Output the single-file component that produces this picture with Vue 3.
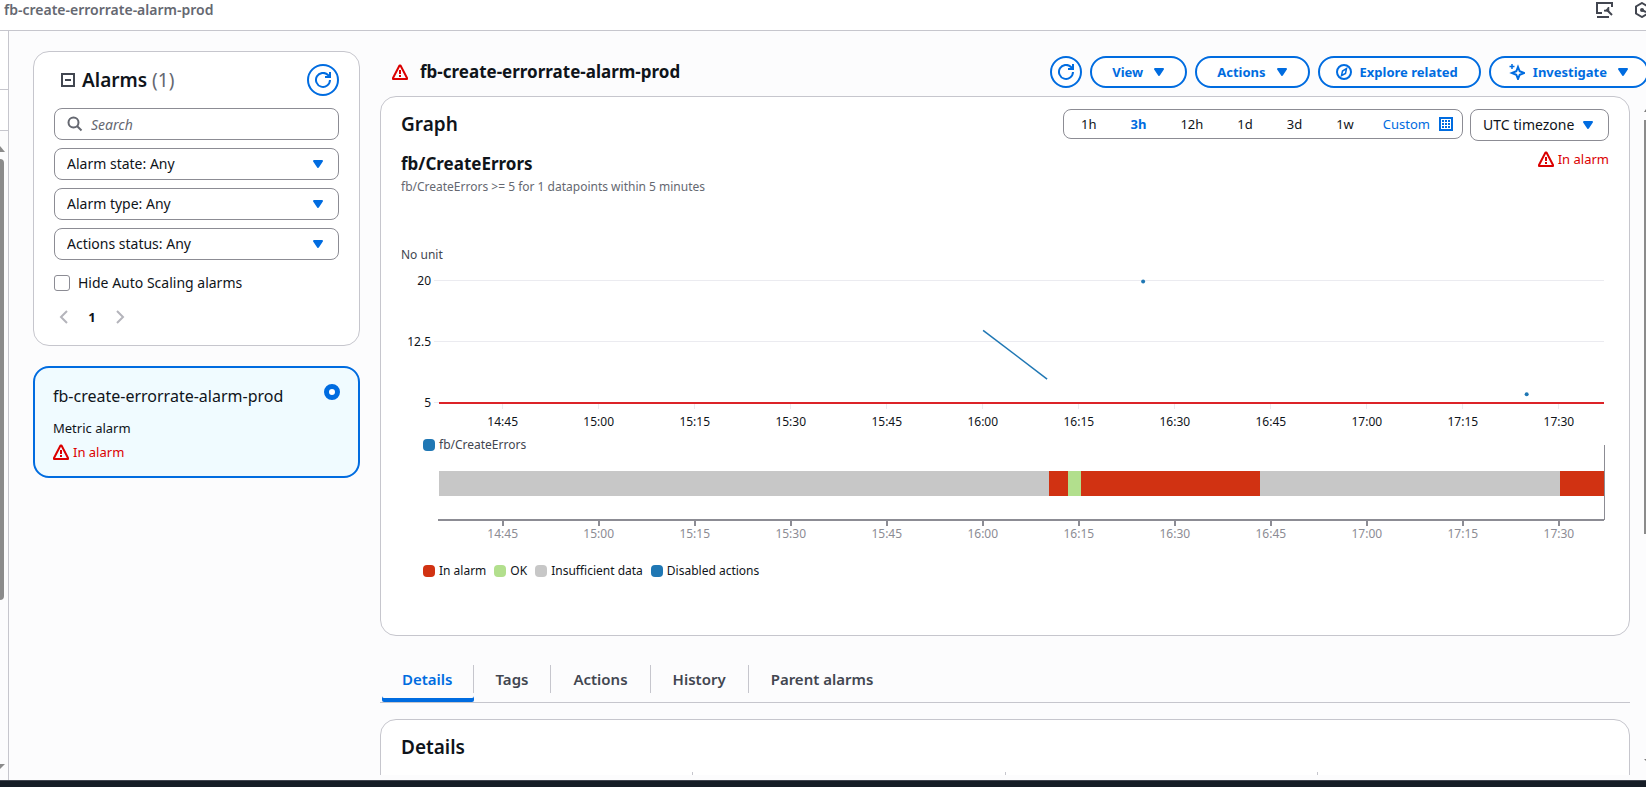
<script setup>
import { ref } from 'vue'

const filters = [
  { id: 'state', text: 'Alarm state: Any' },
  { id: 'type', text: 'Alarm type: Any' },
  { id: 'actions', text: 'Actions status: Any' }
]
const ranges = ['1h', '3h', '12h', '1d', '3d', '1w']
const activeRange = ref('3h')
const tabs = ['Details', 'Tags', 'Actions', 'History', 'Parent alarms']
const activeTab = ref('Details')
const selected = ref('prod')

// Time axis: minutes since the left edge of the plot, 182 minutes in all
const span = 182
const firstTick = 9.95
const pct = (minutes) => (minutes / span) * 100 + '%'
const ticks = ['14:45', '15:00', '15:15', '15:30', '15:45', '16:00', '16:15', '16:30', '16:45', '17:00', '17:15', '17:30']
  .map((label, i) => ({ label, x: pct(firstTick + i * 15) }))

const valueY = (v) => 139.5 - ((v - 5) / 15) * 122
const grid = [20, 12.5, 5]
const states = [
  { from: 0, to: 95.3, kind: 'none' },
  { from: 95.3, to: 98.3, kind: 'alarm' },
  { from: 98.3, to: 100.3, kind: 'ok' },
  { from: 100.3, to: 128.2, kind: 'alarm' },
  { from: 128.2, to: 175.2, kind: 'none' },
  { from: 175.2, to: 182, kind: 'alarm' }
]
const legend = [
  { kind: 'alarm', text: 'In alarm' },
  { kind: 'ok', text: 'OK' },
  { kind: 'none', text: 'Insufficient data' },
  { kind: 'disabled', text: 'Disabled actions' }
]
</script>

<template>
  <div class="page">
    <svg class="defs" aria-hidden="true">
      <symbol id="i-refresh" viewBox="0 0 16 16">
        <path d="M15 8a7 7 0 1 1-2-5L15 5M15 0v5h-5" fill="none" stroke="currentColor" stroke-width="2" />
      </symbol>
      <symbol id="i-warn" viewBox="0 0 16 16">
        <path d="M7.500 1.500h1L15 14v1H1v-1Z" fill="none" stroke="currentColor" stroke-width="2" stroke-linejoin="round" />
        <path d="M8 6v4M8 11v2" fill="none" stroke="currentColor" stroke-width="2" />
      </symbol>
      <symbol id="i-caret" viewBox="0 0 16 16">
        <path d="M4 5h8L8 11Z" fill="currentColor" stroke="currentColor" stroke-width="2" stroke-linejoin="round" />
      </symbol>
    </svg>

    <header class="topbar">
      <span class="crumb">fb-create-errorrate-alarm-prod</span>
      <div class="top-icons">
        <button class="plain" aria-label="Tools">
          <svg width="18" height="16" viewBox="0 0 18 16" fill="none" stroke="currentColor" stroke-width="2">
            <path d="M6 11H1V1h15v4M1 15h12" />
            <path d="M11 8 16 13" />
            <path d="M8 8.500h4.500V5" stroke-width="1.500" />
            <path d="M8 9.500 12 9.500V5.500Z" fill="currentColor" stroke="none" />
          </svg>
        </button>
        <button class="plain" aria-label="Settings">
          <svg width="16" height="16" viewBox="0 0 16 16" fill="none" stroke="currentColor" stroke-width="2">
            <path d="M8 1 14 4.500V11.500L8 15 2 11.500V4.500Z" />
            <circle cx="8" cy="8" r="2" fill="currentColor" stroke="none" />
            <path d="M8 8l4 2" />
          </svg>
        </button>
      </div>
    </header>

    <div class="body">
      <aside class="rail">
        <div class="rail-top"></div>
        <div class="rail-mid"></div>
        <div class="rail-scroll">
          <svg width="8" height="6" viewBox="0 0 8 6"><path d="M0 0 5 6H0Z" fill="#8b8b8b" /></svg>
          <div class="rail-thumb"></div>
          <svg class="rail-down" width="8" height="6" viewBox="0 0 8 6"><path d="M0 0H5L0 5Z" fill="#8b8b8b" /></svg>
        </div>
      </aside>

      <section class="side">
        <div class="card filters">
          <div class="side-head">
            <svg width="14" height="14" viewBox="0 0 14 14" fill="none" stroke="#424650" stroke-width="2">
              <path d="M1 1h12v12H1ZM4 7h6" />
            </svg>
            <h2>Alarms <span>(1)</span></h2>
            <button class="round" aria-label="Refresh alarms"><svg width="16" height="16"><use href="#i-refresh" /></svg></button>
          </div>
          <label class="field">
            <svg width="16" height="16" viewBox="0 0 16 16" fill="none" stroke="#656871" stroke-width="2">
              <circle cx="6.500" cy="6.500" r="5" /><path d="m10 10 4.500 4.500" />
            </svg>
            <input type="text" placeholder="Search" aria-label="Search alarms" />
          </label>
          <label v-for="f in filters" :key="f.id" class="field">
            <select :aria-label="f.text"><option>{{ f.text }}</option></select>
            <svg class="caret" width="16" height="16"><use href="#i-caret" /></svg>
          </label>
          <label class="check"><input type="checkbox" />Hide Auto Scaling alarms</label>
          <nav class="pager" aria-label="Pages">
            <button class="plain" aria-label="Previous page">
              <svg width="16" height="16" viewBox="0 0 16 16" fill="none" stroke="currentColor" stroke-width="2"><path d="M11 2 5 8l6 6" /></svg>
            </button>
            <button class="plain current">1</button>
            <button class="plain" aria-label="Next page">
              <svg width="16" height="16" viewBox="0 0 16 16" fill="none" stroke="currentColor" stroke-width="2"><path d="m5 2 6 6-6 6" /></svg>
            </button>
          </nav>
        </div>

        <label class="alarm-card">
          <span class="alarm-text">
            <span class="alarm-name">fb-create-errorrate-alarm-prod</span>
            <span>Metric alarm</span>
            <span class="status"><svg width="16" height="16"><use href="#i-warn" /></svg>In alarm</span>
          </span>
          <input v-model="selected" type="radio" name="alarm" value="prod" />
        </label>
      </section>

      <main class="main">
        <div class="main-head">
          <svg class="red" width="16" height="16"><use href="#i-warn" /></svg>
          <h1>fb-create-errorrate-alarm-prod</h1>
          <div class="actions">
            <button class="round" aria-label="Refresh"><svg width="16" height="16"><use href="#i-refresh" /></svg></button>
            <button class="pill">View<svg width="16" height="16"><use href="#i-caret" /></svg></button>
            <button class="pill">Actions<svg width="16" height="16"><use href="#i-caret" /></svg></button>
            <button class="pill explore">
              <svg width="16" height="16" viewBox="0 0 16 16" fill="none" stroke="currentColor">
                <circle cx="8" cy="8" r="7" stroke-width="2" />
                <path d="M10.500 4.500 9.500 9.500 5.500 11.500 6.500 7Z" stroke-width="1.500" />
              </svg>Explore related
            </button>
            <button class="pill investigate">
              <svg width="16" height="16" viewBox="0 0 16 16" fill="none" stroke="currentColor">
                <path d="M9 3 10.700 7.300 15 9 10.700 10.700 9 15 7.300 10.700 3 9 7.300 7.300Z" stroke-width="2" />
                <path d="M3 0v5M.5 2.500h5" stroke-width="1.500" />
              </svg>Investigate<svg width="16" height="16"><use href="#i-caret" /></svg>
            </button>
          </div>
        </div>

        <div class="card graph">
          <div class="graph-head">
            <h2>Graph</h2>
            <div class="ranges">
              <button v-for="r in ranges" :key="r" class="plain" :class="{ on: r === activeRange }" @click="activeRange = r">{{ r }}</button>
              <button class="plain custom">Custom
                <svg width="14" height="14" viewBox="0 0 14 14">
                  <path d="M1 1h12v12H1Z" fill="none" stroke="currentColor" stroke-width="2" />
                  <path d="M3 4h8M3 7h8M3 10h8" stroke="currentColor" stroke-width="2" stroke-dasharray="2 1" />
                </svg>
              </button>
            </div>
            <label class="field zone">
              <select aria-label="Timezone"><option>UTC timezone</option></select>
              <svg class="caret" width="16" height="16"><use href="#i-caret" /></svg>
            </label>
          </div>
          <div class="metric-head">
            <h3>fb/CreateErrors</h3>
            <span class="status"><svg width="16" height="16"><use href="#i-warn" /></svg>In alarm</span>
          </div>
          <p class="rule">fb/CreateErrors &gt;= 5 for 1 datapoints within 5 minutes</p>
          <p class="unit">No unit</p>

          <div class="plot">
            <svg class="chart" height="174">
              <template v-for="g in grid" :key="g">
                <line x1="-5" x2="100%" :y1="valueY(g)" :y2="valueY(g)" class="gridline" />
                <text x="-8" :y="valueY(g) + 4" text-anchor="end">{{ g }}</text>
              </template>
              <line v-for="t in ticks" :key="t.label" :x1="t.x" :x2="t.x" y1="141" y2="146" class="gridline" />
              <line x1="0" x2="100%" y1="140" y2="140" class="threshold" />
              <line :x1="pct(85)" :x2="pct(95)" :y1="valueY(14) + 1" :y2="valueY(8) + 1" class="series" />
              <circle :cx="pct(110)" :cy="valueY(20) + 1" r="2" class="dot" />
              <circle :cx="pct(169.92)" :cy="valueY(6)" r="2" class="dot" />
              <text v-for="t in ticks" :key="'l' + t.label" :x="t.x" y="163" text-anchor="middle">{{ t.label }}</text>
            </svg>
          </div>
          <div class="legend first"><span class="disabled">fb/CreateErrors</span></div>
          <div class="plot">
            <svg class="chart" height="94">
              <rect
                v-for="s in states" :key="s.from" :x="pct(s.from)" y="18" :width="pct(s.to - s.from)" height="25"
                :class="s.kind" shape-rendering="crispEdges"
              />
              <line x1="100%" x2="100%" y1="-8" y2="67" class="now" />
              <line x1="-1" x2="100%" y1="67" y2="67" class="axis" />
              <line v-for="t in ticks" :key="t.label" :x1="t.x" :x2="t.x" y1="67" y2="73" class="axis" />
              <text v-for="t in ticks" :key="'l' + t.label" :x="t.x" y="85" text-anchor="middle" class="muted">{{ t.label }}</text>
            </svg>
          </div>
          <div class="legend second">
            <span v-for="l in legend" :key="l.kind" :class="l.kind">{{ l.text }}</span>
          </div>
        </div>

        <nav class="tabs" role="tablist">
          <button
            v-for="t in tabs" :key="t" role="tab" class="plain" :class="{ on: t === activeTab }"
            :aria-selected="t === activeTab" @click="activeTab = t"
          ><span>{{ t }}</span></button>
        </nav>

        <div class="card details">
          <h2>Details</h2>
          <div class="columns"><i></i><i></i><i></i><i></i></div>
        </div>
      </main>

      <div class="page-scroll">
        <svg width="2" height="4"><path d="M0 4 2 1V4Z" fill="#7d7d7d" /></svg>
        <div class="page-thumb"></div>
        <svg width="3" height="4"><path d="M0 0H3V3Z" fill="#7d7d7d" /></svg>
      </div>
    </div>
    <footer class="footer"></footer>
  </div>
</template>

<style>
body { margin: 0; overflow: hidden; }
</style>

<style scoped>
.page {
  --blue: #006ce0;
  display: flex;
  flex-direction: column;
  height: 100vh;
  overflow: hidden;
  background: #fcfcfd;
  color: #0f141a;
  font: 13px/20px "Noto Sans", "Open Sans", sans-serif;
}
.page * { box-sizing: border-box; }
.defs { position: absolute; width: 0; height: 0; }
h1, h2, h3, p { margin: 0; }
h2 { font-size: 19px; line-height: 24px; font-weight: 600; }
h1, h3 { font-size: 17px; line-height: 24px; font-weight: 700; }
svg { flex: none; display: block; }
button, input, select { font: inherit; color: inherit; }
button { cursor: pointer; }
.plain { border: 0; background: none; padding: 0; }
.red { color: #db0000; }

.topbar {
  display: flex;
  justify-content: space-between;
  flex: none;
  height: 31px;
  padding-left: 4px;
  background: #fff;
  border-bottom: 1px solid #c6c6cd;
  overflow: hidden;
}
.crumb { color: #656871; font-size: 14px; font-weight: 600; }
.top-icons { display: flex; gap: 20px; height: 20px; margin-right: -4px; align-items: center; color: #424650; }

.body { display: flex; flex: 1; min-height: 0; padding-bottom: 5px; }
.rail { display: flex; flex-direction: column; width: 9px; margin-bottom: -5px; border-right: 1px solid #c6c6cd; flex: none; }
.rail-top { height: 59px; border-bottom: 1px solid #c6c6cd; background: #fff; }
.rail-mid { height: 41px; border-bottom: 1px solid #c6c6cd; background: #fff; }
.rail-scroll { display: flex; flex-direction: column; flex: 1; padding: 15px 0 10px; background: #fcfcfd; }
.rail-thumb { flex: 0 1 441px; width: 4px; margin-top: 7px; background: #8b8b8b; border-radius: 0 4px 4px 0; }
.rail-down { margin-top: auto; }

.card { background: #fff; border: 1px solid #c6c6cd; border-radius: 16px; }
.side { width: 327px; flex: none; margin: 20px 20px 0 24px; }
.filters { display: flex; flex-direction: column; gap: 8px; padding: 12px 20px 17px; }
.side-head { display: flex; align-items: center; gap: 7px; padding: 0 0 4px 7px; }
.side-head h2 { flex: 1; }
.side-head h2 span { color: #656871; font-weight: 400; }
.round {
  display: grid;
  place-items: center;
  flex: none;
  width: 32px;
  height: 32px;
  padding: 0;
  color: var(--blue);
  background: #fff;
  border: 2px solid var(--blue);
  border-radius: 50%;
}
.field { display: flex; align-items: center; height: 32px; border: 1px solid #8c8c94; border-radius: 8px; padding: 0 12px; background: #fff; }
.field, .check { font-size: 14px; }
.field input, .field select { flex: 1; min-width: 0; height: 30px; padding: 0; border: 0; outline: 0; background: none; appearance: none; }
.field input { margin-left: 8px; }
.field input::placeholder { color: #656871; font-style: italic; opacity: 1; }
.caret { color: var(--blue); }
.check { display: flex; align-items: center; gap: 8px; margin-top: 5px; }
.check input { appearance: none; width: 16px; height: 16px; margin: 0; border: 1px solid #8c8c94; border-radius: 3px; background: #fff; }
.pager { display: flex; align-items: center; gap: 8px; padding-left: 2px; margin-top: 5px; color: #b4b4bb; height: 22px; }
.pager .current { width: 24px; color: #0f141a; font-weight: 700; }
.pager .plain { display: grid; place-items: center; }

.alarm-card {
  display: flex;
  justify-content: space-between;
  margin-top: 20px;
  padding: 16px 18px 14px;
  background: #f0fbff;
  border: 2px solid var(--blue);
  border-radius: 16px;
}
.alarm-text { display: flex; flex-direction: column; gap: 4px; }
.alarm-name { font-size: 16px; line-height: 24px; margin-bottom: 6px; }
.alarm-card input { appearance: none; width: 16px; height: 16px; margin: 0; border: 5px solid var(--blue); border-radius: 50%; background: #fff; }
.status { display: flex; align-items: center; gap: 4px; color: #db0000; }

.main { flex: 1; min-width: 0; padding-top: 25px; overflow: hidden; }
.main-head { display: flex; align-items: center; gap: 12px; padding-left: 12px; margin-bottom: 8px; }
.main-head h1 { flex: 1; }
.actions { display: flex; gap: 8px; margin-right: -3px; }
.pill {
  display: flex;
  align-items: center;
  gap: 8px;
  height: 32px;
  padding: 0 18px 0 20px;
  color: var(--blue);
  background: #fff;
  border: 2px solid var(--blue);
  border-radius: 16px;
  font-weight: 700;
  white-space: nowrap;
}
.explore { padding: 0 21px 0 16px; }
.investigate { padding: 0 16px 0 18px; }

.graph { margin-right: 16px; padding: 12px 20px 56px; }
.graph-head { display: flex; align-items: flex-start; gap: 7px; }
.graph-head h2 { flex: 1; line-height: 30px; }
.ranges { display: flex; align-items: center; height: 30px; width: 400px; padding-right: 9px; border: 1px solid #8c8c94; border-radius: 8px; }
.ranges .plain { padding: 0 17px; }
.ranges .on { color: var(--blue); font-weight: 700; }
.ranges .custom { display: flex; align-items: center; gap: 9px; margin-left: auto; padding: 0; color: var(--blue); }
.zone { width: 139px; }
.metric-head { display: flex; justify-content: space-between; height: 30px; margin-top: 8px; align-items: flex-start; }
.metric-head h3 { line-height: 30px; }
.rule { font-size: 12px; line-height: 16px; color: #656871; }
.unit { font-size: 12px; line-height: 16px; color: #424650; margin-top: 52px; }
.plot { padding: 0 5px 0 38px; }
.chart { width: 100%; overflow: visible; font-size: 12px; }
.chart text { fill: #0f141a; }
.chart .muted { fill: #8c8c94; }
.gridline { stroke: #ebebf0; shape-rendering: crispEdges; }
.threshold { stroke: #dc2328; stroke-width: 2; }
.series { stroke: #1f77b4; stroke-width: 1.5; }
.dot { fill: #1f77b4; }
.now { stroke: #8c8c94; shape-rendering: crispEdges; }
.axis { stroke: #8c8c94; stroke-width: 2; shape-rendering: crispEdges; }
rect.none { fill: #c7c7c7; }
rect.alarm { fill: #d13212; }
rect.ok { fill: #b2df8d; }
.legend { display: flex; gap: 8px; font-size: 12px; line-height: 16px; }
.legend span { display: flex; align-items: center; gap: 4px; }
.legend span::before { content: ""; width: 12px; height: 12px; border-radius: 4px; background: #c7c7c7; }
.legend .alarm::before { background: #d13212; }
.legend .ok::before { background: #b2df8d; }
.legend .disabled::before { background: #1f77b4; }
.first { padding-left: 22px; color: #424650; }
.second { padding-left: 22px; margin-top: 16px; }

.tabs { display: flex; margin: 29px 16px 16px 0; padding-left: 2px; height: 38px; border-bottom: 1px solid #c6c6cd; }
.tabs .plain { height: 37px; padding-bottom: 9px; font-size: 15px; font-weight: 600; color: #424650; }
.tabs span { display: block; padding: 0 22px; line-height: 28px; border-right: 1px solid #c6c6cd; }
.tabs .plain:first-child span { padding: 0 20px; }
.tabs .plain:last-child span { border: 0; }
.tabs .plain.on { color: var(--blue); box-shadow: inset 0 -4px var(--blue); border-radius: 2px; }

.details { height: 300px; margin-right: 16px; padding-top: 15px; }
.details h2 { padding-left: 20px; }
.columns { display: flex; margin-top: 13px; }
.columns i { flex: 1; height: 100px; border-right: 1px solid #c6c6cd; }
.columns i:last-child { border: 0; }

.page-scroll { display: flex; flex-direction: column; width: 2px; flex: none; padding: 77px 0 12px; margin-left: -2px; }
.page-thumb { flex: 0 1 414px; margin: 8px 0 auto; background: #8b8b8b; }
.footer { flex: none; height: 7px; background: #161d26; border-top: 1px solid #424650; }
</style>
